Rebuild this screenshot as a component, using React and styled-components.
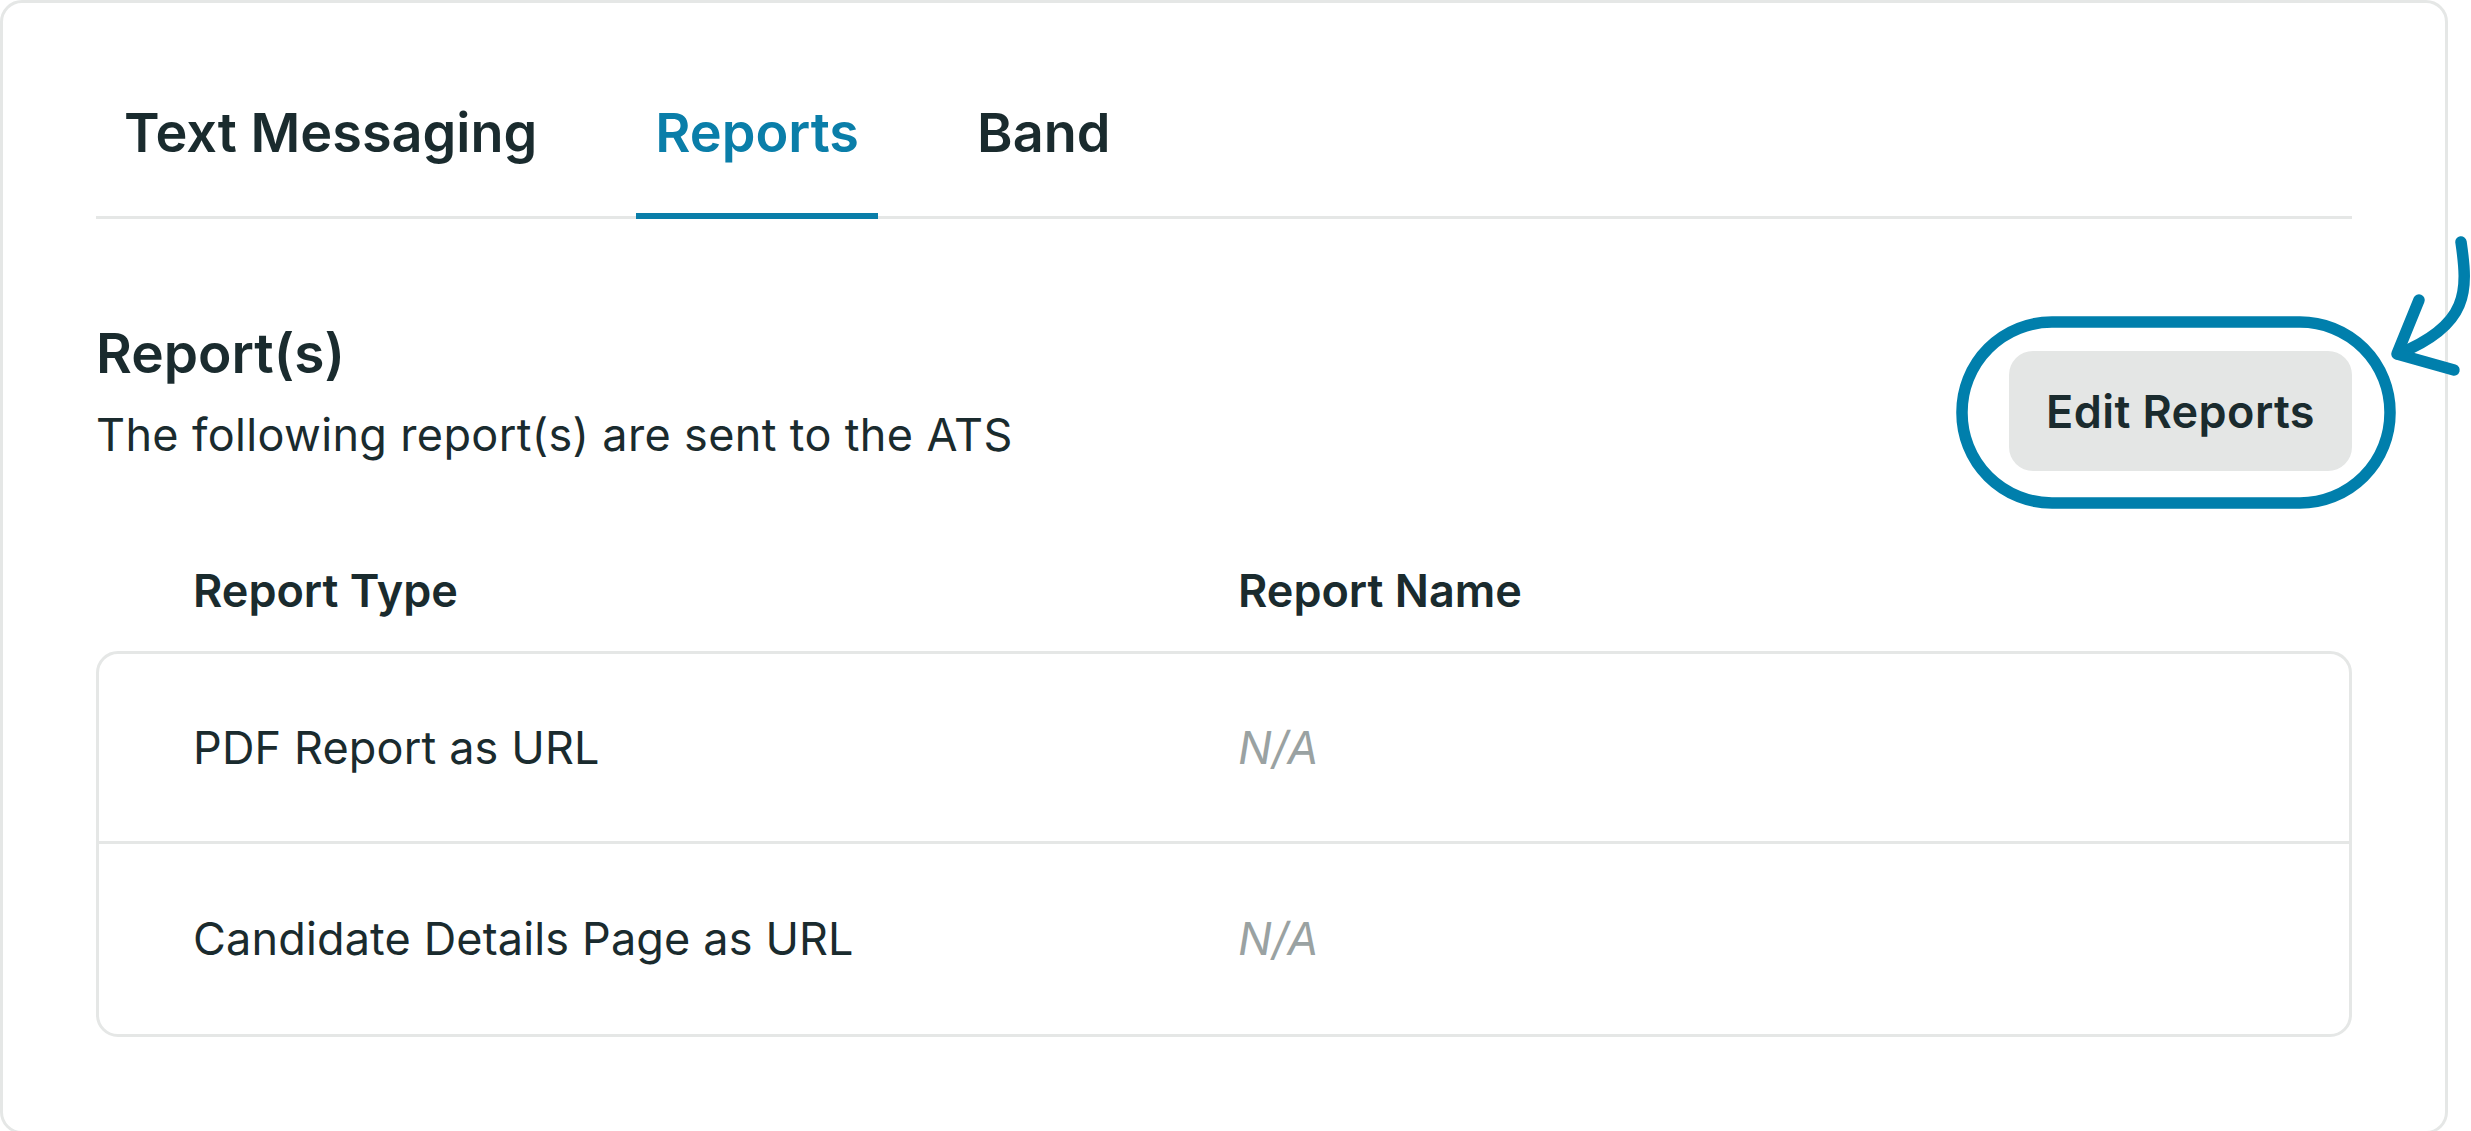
import React from "react";
import styled, { createGlobalStyle } from "styled-components";

const GlobalStyle = createGlobalStyle`
  * { box-sizing: border-box; }
  html, body { margin: 0; padding: 0; background: #ffffff; }
  body { font-family: Inter, "Noto Sans", "Liberation Sans", sans-serif; color: #1a2b2e; }
`;

const Card = styled.section`
  position: relative;
  width: 2448px;
  border: 3px solid #e5e7e6;
  border-radius: 22px;
  padding: 97px 93px 94px;
  background: #ffffff;
`;

const TabList = styled.nav`
  display: flex;
  gap: 80px;
  padding-left: 9px;
  border-bottom: 3px solid #e5e7e6;
`;

const Tab = styled.div`
  font-weight: 600;
  font-size: 54px;
  line-height: 66px;
  padding: 0 19px 47px;
  margin-bottom: -3px;
  color: ${(p) => (p.$active ? "#0a7ea9" : "#1a2b2e")};
  border-bottom: 6px solid ${(p) => (p.$active ? "#0a7ea9" : "transparent")};
`;

const HeaderRow = styled.div`
  display: flex;
  justify-content: space-between;
  align-items: flex-start;
  margin-top: 101px;
`;

const TitleBlock = styled.div`
  display: flex;
  flex-direction: column;
`;

const Title = styled.h2`
  margin: 0;
  font-weight: 600;
  font-size: 55px;
  line-height: 66px;
`;

const Subtitle = styled.p`
  margin: 22px 0 0;
  font-weight: 400;
  font-size: 45px;
  line-height: 54px;
  letter-spacing: 0.35px;
`;

const ButtonWrap = styled.div`
  position: relative;
  margin-top: 31px;
`;

const EditButton = styled.button`
  height: 120px;
  padding: 0 37px;
  border: none;
  border-radius: 24px;
  background: #e4e6e5;
  color: #1a2b2e;
  font-family: Inter, "Noto Sans", "Liberation Sans", sans-serif;
  font-weight: 600;
  font-size: 45px;
  letter-spacing: 0.4px;
  display: flex;
  align-items: center;
`;

const Annotation = styled.svg`
  position: absolute;
  right: -119px;
  top: -121px;
  width: 521px;
  height: 290px;
  overflow: visible;
  pointer-events: none;
`;

const TableHead = styled.div`
  display: grid;
  grid-template-columns: 1045px 1fr;
  padding-left: 97px;
  margin-top: 93px;
  font-weight: 600;
  font-size: 45px;
  line-height: 54px;
`;

const Table = styled.div`
  margin-top: 33px;
  border: 3px solid #e5e7e6;
  border-radius: 22px;
`;

const Row = styled.div`
  display: grid;
  grid-template-columns: 1045px 1fr;
  align-items: center;
  height: ${(p) => (p.$first ? "187px" : "193px")};
  padding-left: 94px;
  font-size: 45px;
  line-height: 54px;
  letter-spacing: 0.15px;
  border-top: ${(p) => (p.$first ? "none" : "3px solid #e5e7e6")};
`;

const Empty = styled.span`
  font-style: italic;
  color: #9aa2a2;
`;

const rows = ["PDF Report as URL", "Candidate Details Page as URL"];

export default function App() {
  return (
    <>
      <GlobalStyle />
      <Card>
        <TabList>
          <Tab>Text Messaging</Tab>
          <Tab $active>Reports</Tab>
          <Tab>Band</Tab>
        </TabList>

        <HeaderRow>
          <TitleBlock>
            <Title>Report(s)</Title>
            <Subtitle>The following report(s) are sent to the ATS</Subtitle>
          </TitleBlock>
          <ButtonWrap>
            <EditButton>Edit Reports</EditButton>
            <Annotation viewBox="0 0 521 290">
              <rect
                x="12"
                y="92"
                width="428"
                height="181"
                rx="90"
                ry="90"
                fill="none"
                stroke="#007fac"
                strokeWidth="11.5"
              />
              <path
                d="M511 12 C518 60, 520 95, 448 124"
                fill="none"
                stroke="#007fac"
                strokeWidth="11.5"
                strokeLinecap="round"
              />
              <path
                d="M469 70 L447 124 L504 140"
                fill="none"
                stroke="#007fac"
                strokeWidth="11.5"
                strokeLinecap="round"
                strokeLinejoin="round"
              />
            </Annotation>
          </ButtonWrap>
        </HeaderRow>

        <TableHead>
          <span>Report Type</span>
          <span>Report Name</span>
        </TableHead>
        <Table>
          {rows.map((r, i) => (
            <Row key={r} $first={i === 0}>
              <span>{r}</span>
              <Empty>N/A</Empty>
            </Row>
          ))}
        </Table>
      </Card>
    </>
  );
}
